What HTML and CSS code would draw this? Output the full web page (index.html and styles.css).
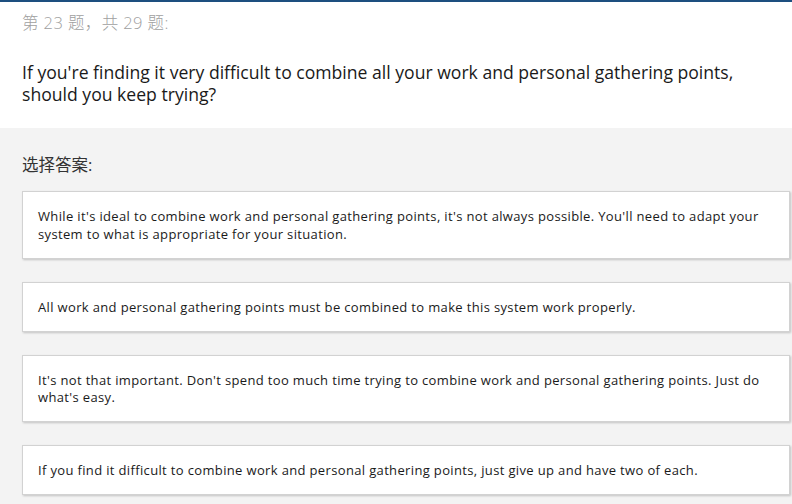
FILE: index.html
```html
<!DOCTYPE html>
<html lang="zh">
<head>
<meta charset="utf-8">
<link rel="stylesheet" href="styles.css">
</head>
<body>
<div class="topbar"></div>
<header class="head">
  <div class="counter">第 23 题，共 29 题:</div>
  <h1 class="question">If you're finding it very difficult to combine all your work and personal gathering points, should you keep trying?</h1>
</header>
<main class="answers">
  <div class="label">选择答案:</div>
  <div class="option">While it's ideal to combine work and personal gathering points, it's not always possible. You'll need to adapt your system to what is appropriate for your situation.</div>
  <div class="option">All work and personal gathering points must be combined to make this system work properly.</div>
  <div class="option">It's not that important. Don't spend too much time trying to combine work and personal gathering points. Just do what's easy.</div>
  <div class="option">If you find it difficult to combine work and personal gathering points, just give up and have two of each.</div>
</main>
</body>
</html>
```
FILE: styles.css
```css
html, body {
  margin: 0;
  padding: 0;
}
body {
  font-family: "Open Sans", "Noto Sans CJK SC", sans-serif;
  background: #f3f3f3;
  color: #222;
  overflow: hidden;
}
.topbar {
  height: 2px;
  background: #1d4f7f;
  box-shadow: 0 1px 3px rgba(0,0,0,0.15);
}
.head {
  background: #fff;
  height: 126px;
  padding: 10px 22px 0 22px;
  box-sizing: border-box;
}
.counter {
  font-size: 16.5px;
  font-weight: 300;
  letter-spacing: 0.4px;
  color: #a0a0a0;
  line-height: 22px;
}
.question {
  margin: 27px 0 0 0;
  font-size: 17.6px;
  font-weight: normal;
  line-height: 22px;
  color: #1a1a1a;
}
.answers {
  padding: 26px 2px 10px 22px;
}
.label {
  font-size: 16.5px;
  line-height: 22px;
  color: #333;
  margin-bottom: 15px;
}
.option {
  background: #fff;
  border: 1px solid #d2d2d2;
  box-shadow: 1px 1px 2px rgba(0,0,0,0.2);
  padding: 16px 15px 14.5px 15px;
  font-size: 13px;
  letter-spacing: 0.35px;
  line-height: 17.5px;
  color: #1a1a1a;
  margin-bottom: 23px;
}
```
